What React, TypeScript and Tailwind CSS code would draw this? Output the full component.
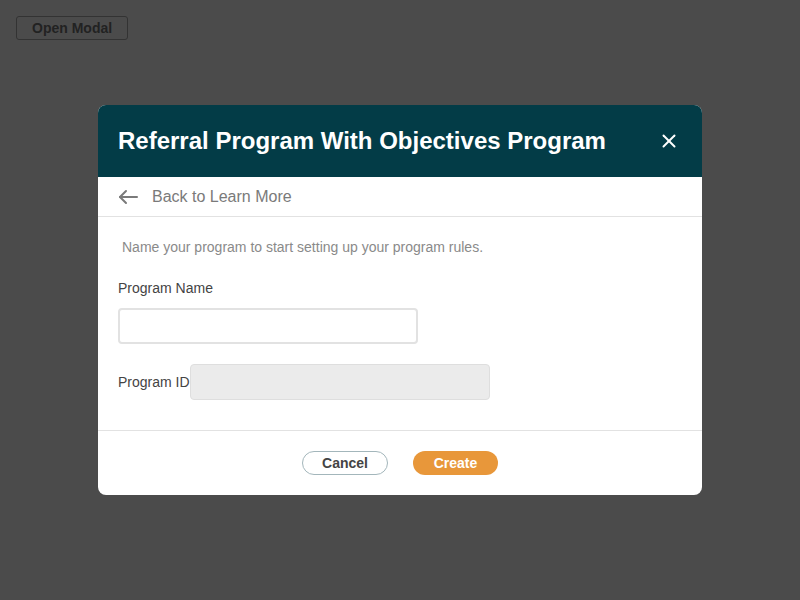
import { X } from "lucide-react"

export default function App() {
  return (
    <div className="min-h-[600px] w-full bg-[#4b4b4b] font-['Liberation_Sans',Arial,sans-serif]">
      <div className="p-4">
        <button className="h-6 px-[15px] border border-[#333] rounded-[3px] text-sm font-bold text-[#222] leading-none">
          Open Modal
        </button>
      </div>

      <div className="flex justify-center pt-[49px]">
        <div className="w-[604px] bg-white rounded-lg overflow-hidden">
          <div className="h-[72px] bg-[#033c47] flex items-center justify-between pl-5 pr-[22px]">
            <h2 className="text-white text-2xl font-bold">Referral Program With Objectives Program</h2>
            <X className="w-[22px] h-[22px] text-white" strokeWidth={2.2} />
          </div>

          <div className="h-10 flex items-center border-b border-[#e2e2e2] pl-5 gap-[14px]">
            <svg width="20" height="16" viewBox="0 0 20 16" fill="none" stroke="#7a7a7a" strokeWidth="2" strokeLinecap="round" strokeLinejoin="round">
              <path d="M19 8H2" />
              <path d="M8 2L2 8l6 6" />
            </svg>
            <span className="text-base text-[#7a7a7a]">Back to Learn More</span>
          </div>

          <div className="px-5 pt-5 pb-[30px] border-b border-[#e2e2e2]">
            <p className="text-sm text-[#8a8a8a] pl-1">Name your program to start setting up your program rules.</p>
            <label className="block mt-[21px] text-sm text-[#444]">Program Name</label>
            <input className="block mt-[10px] w-[300px] h-9 border-2 border-[#e2e2e2] rounded" />
            <div className="flex items-center mt-[20px]">
              <span className="text-sm text-[#444]">Program ID</span>
              <div className="w-[300px] h-9 bg-[#ebebeb] border border-[#dedede] rounded" />
            </div>
          </div>

          <div className="flex justify-center gap-[25px] pt-5 pb-5">
            <button className="w-[86px] h-6 rounded-full border border-[#a3b6bb] text-sm font-bold text-[#444] leading-none">
              Cancel
            </button>
            <button className="w-[85px] h-6 rounded-full bg-[#e8973a] text-sm font-bold text-white leading-none">
              Create
            </button>
          </div>
        </div>
      </div>
    </div>
  )
}
